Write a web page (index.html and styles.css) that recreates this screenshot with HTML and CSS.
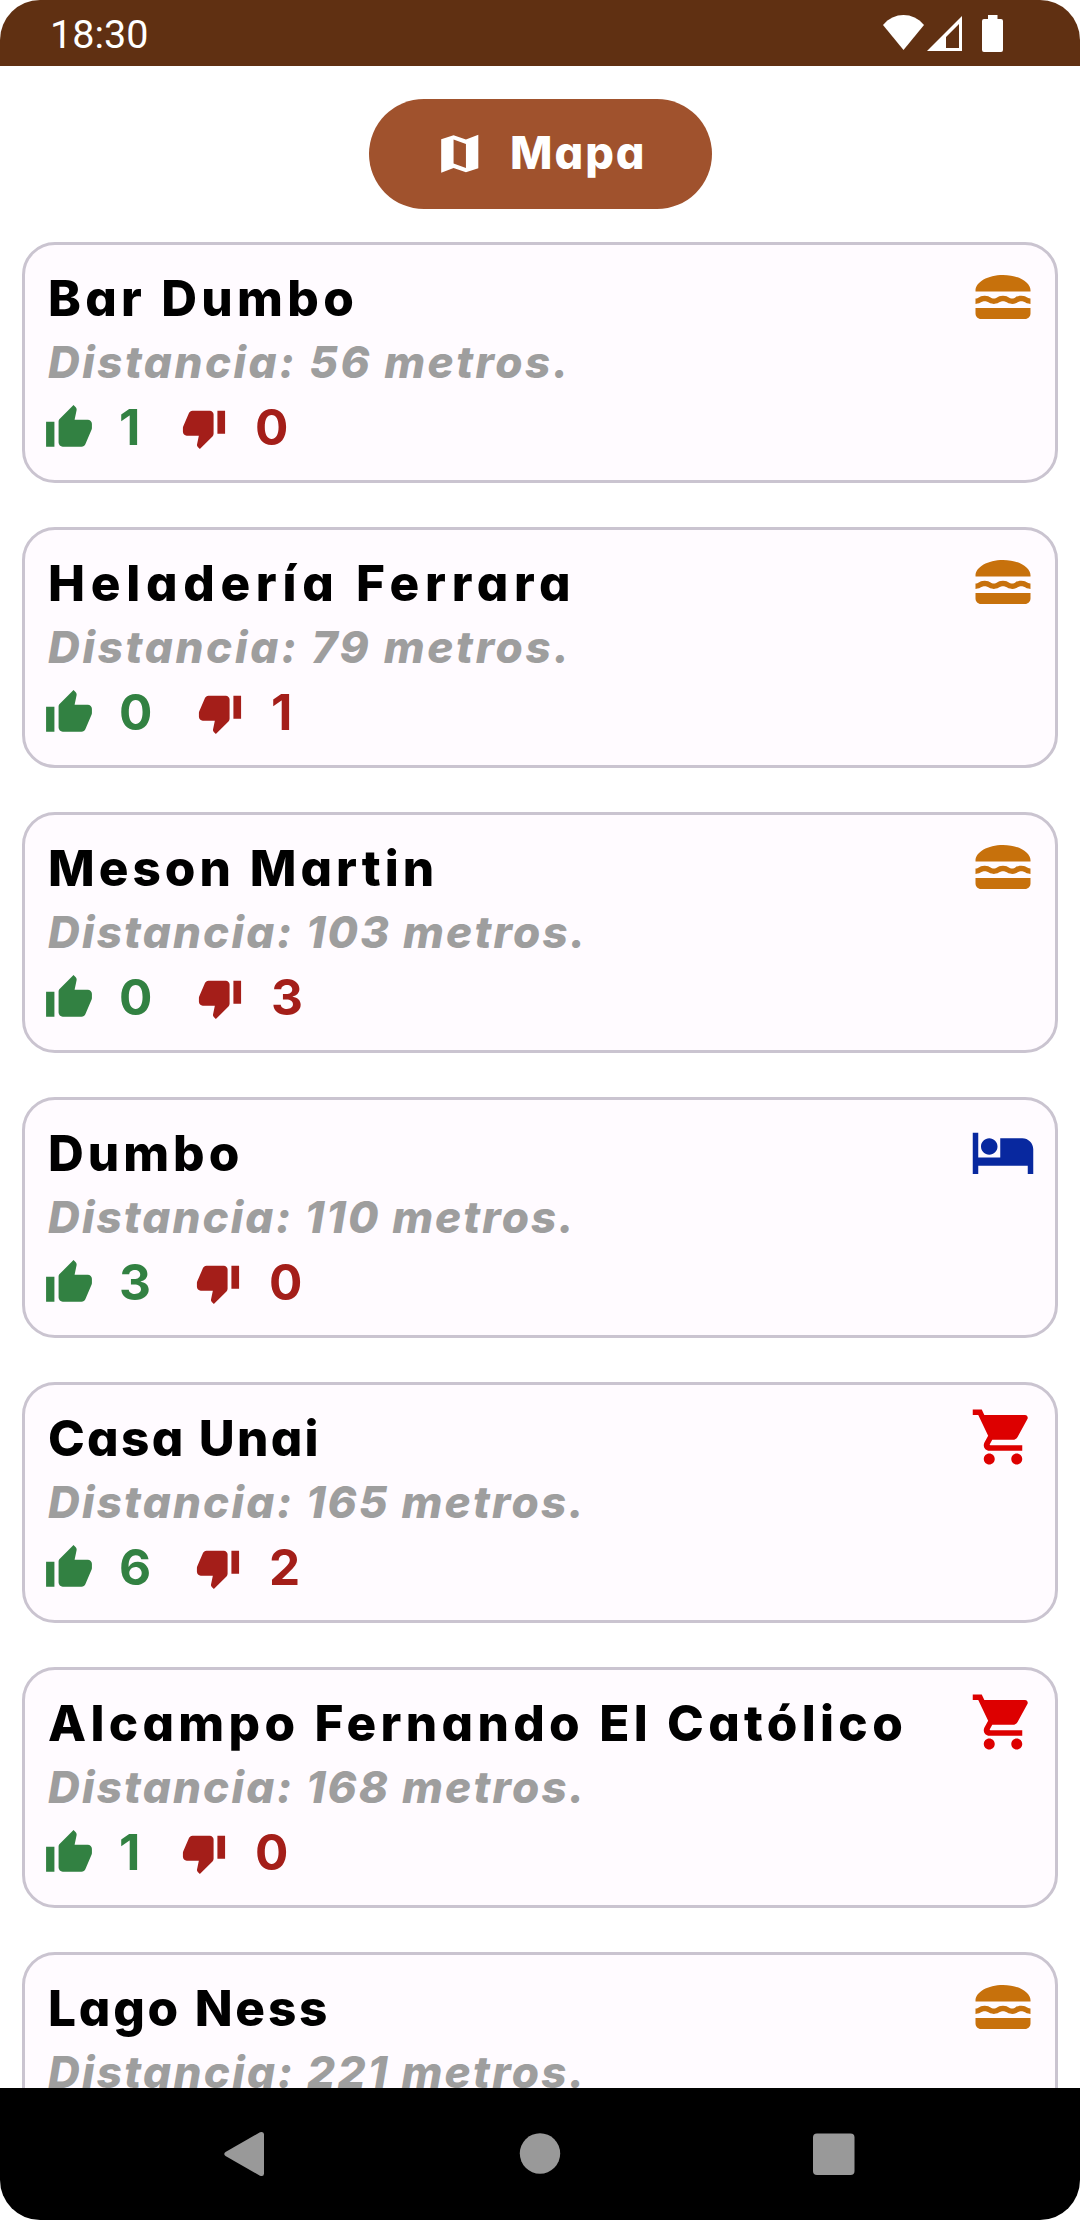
FILE: index.html
```html
<!DOCTYPE html>
<html lang="es">
<head>
<meta charset="utf-8">
<title>Lugares cercanos</title>
<link rel="stylesheet" href="styles.css">
</head>
<body>
<svg class="defs" width="0" height="0" aria-hidden="true">
  <symbol id="burger" viewBox="0 0 24 24"><path d="M2 16H22V18C22 19.100 21.100 20 20 20H4C2.900 20 2 19.100 2 18ZM22 10C22.320 6.720 17.720 4 12.010 4C6.300 4 1.700 6.720 2.020 10ZM5.350 13.500c.55 0 .78.14 1.150.36.45.27 1.070.64 2.180.64s1.730-.37 2.180-.64c.37-.23.59-.36 1.150-.36.55 0 .78.14 1.150.36.45.27 1.070.64 2.180.64 1.110 0 1.730-.37 2.180-.64.37-.23.59-.36 1.150-.36.55 0 .78.14 1.150.36.45.27 1.070.63 2.170.64v-1.980s-.79-.16-1.160-.38c-.45-.27-1.070-.64-2.180-.64-1.110 0-1.730.37-2.180.64-.37.23-.6.36-1.150.36s-.78-.14-1.150-.36c-.45-.27-1.070-.64-2.180-.64s-1.730.37-2.180.64c-.37.23-.59.36-1.150.36-.55 0-.78-.14-1.150-.36-.45-.27-1.070-.64-2.180-.64-1.110 0-1.730.37-2.180.64-.37.23-.59.36-1.150.36v2c1.110 0 1.730-.37 2.180-.64.37-.22.6-.36 1.170-.36z"/></symbol>
  <symbol id="bed" viewBox="0 0 24 24"><path d="M7 13c1.660 0 3-1.340 3-3S8.660 7 7 7s-3 1.340-3 3 1.340 3 3 3zm12-6h-8v7H3V5H1v15h2v-3h18v3h2v-9c0-2.210-1.790-4-4-4z"/></symbol>
  <symbol id="cart" viewBox="0 0 24 24"><path d="M7 18c-1.100 0-1.990.9-1.990 2S5.900 22 7 22s2-.9 2-2-.9-2-2-2zM1 2v2h2l3.600 7.590-1.350 2.450c-.16.28-.25.61-.25.96 0 1.100.9 2 2 2h12v-2H7.420c-.14 0-.25-.11-.25-.25l.03-.12.9-1.630h7.450c.75 0 1.410-.41 1.750-1.030l3.580-6.490c.08-.14.12-.31.12-.48 0-.55-.45-1-1-1H5.210l-.94-2H1zm16 16c-1.100 0-1.990.9-1.990 2s.89 2 1.990 2 2-.9 2-2-.9-2-2-2z"/></symbol>
  <symbol id="up" viewBox="0 0 24 24"><path d="M1 21h4V9H1v12zm22-11c0-1.100-.9-2-2-2h-6.310l.95-4.570.03-.32c0-.41-.17-.79-.44-1.060L14.170 1 7.590 7.590C7.220 7.950 7 8.450 7 9v10c0 1.100.9 2 2 2h9c.83 0 1.540-.5 1.840-1.220l3.020-7.050c.09-.23.14-.47.14-.73v-2z"/></symbol>
  <symbol id="down" viewBox="0 0 24 24"><path d="M15 3H6c-.83 0-1.540.5-1.840 1.220l-3.020 7.050c-.09.23-.14.47-.14.73v2c0 1.100.9 2 2 2h6.310l-.95 4.570-.03.32c0 .41.17.79.44 1.060L9.830 23l6.590-6.590c.36-.36.58-.86.58-1.410V5c0-1.100-.9-2-2-2zm4 0v12h4V3h-4z"/></symbol>
</svg>

<div class="phone">
  <header class="status">
    <span class="clock">18:30</span>
    <div class="indicators">
      <svg class="wifi" viewBox="0 0 41 35"><path d="M20.500 35 0 10C11-3.300 30-3.300 41 10z"/></svg>
      <svg class="signal" viewBox="0 0 35 35"><path fill-rule="evenodd" d="M35 0v35H0zM32 8 19 21v11h13z"/></svg>
      <svg class="battery" viewBox="0 0 21 37"><path d="M6 0h9.500v4H19a2 2 0 0 1 2 2v29a2 2 0 0 1-2 2H2a2 2 0 0 1-2-2V6a2 2 0 0 1 2-2h4z"/></svg>
    </div>
  </header>

  <main class="screen">
    <button class="map-button" type="button">
      <svg class="map-icon" viewBox="0 0 24 24"><path fill-rule="evenodd" d="M15 5.100 9 3 3 5.020v16.200l6-2.330 6 2.100 6-2.020V2.770zM15 18.890l-6-2.110V5.110l6 2.110z"/></svg>
      <span class="map-label">Mapa</span>
    </button>

    <section class="list">
      <article class="card bar-dumbo">
        <div class="info">
          <h2 class="name">Bar Dumbo</h2>
          <p class="distance">Distancia: 56 metros.</p>
          <div class="votes"><svg class="up"><use href="#up"/></svg><span class="likes one">1</span><svg class="down"><use href="#down"/></svg><span class="dislikes">0</span></div>
        </div>
        <svg class="kind food"><use href="#burger"/></svg>
      </article>
      <article class="card ferrara">
        <div class="info">
          <h2 class="name">Heladería Ferrara</h2>
          <p class="distance">Distancia: 79 metros.</p>
          <div class="votes"><svg class="up"><use href="#up"/></svg><span class="likes zero">0</span><svg class="down"><use href="#down"/></svg><span class="dislikes one">1</span></div>
        </div>
        <svg class="kind food"><use href="#burger"/></svg>
      </article>
      <article class="card meson">
        <div class="info">
          <h2 class="name">Meson Martin</h2>
          <p class="distance">Distancia: 103 metros.</p>
          <div class="votes"><svg class="up"><use href="#up"/></svg><span class="likes zero">0</span><svg class="down"><use href="#down"/></svg><span class="dislikes">3</span></div>
        </div>
        <svg class="kind food"><use href="#burger"/></svg>
      </article>
      <article class="card dumbo">
        <div class="info">
          <h2 class="name">Dumbo</h2>
          <p class="distance">Distancia: 110 metros.</p>
          <div class="votes"><svg class="up"><use href="#up"/></svg><span class="likes">3</span><svg class="down"><use href="#down"/></svg><span class="dislikes">0</span></div>
        </div>
        <svg class="kind lodging"><use href="#bed"/></svg>
      </article>
      <article class="card casa">
        <div class="info">
          <h2 class="name">Casa Unai</h2>
          <p class="distance">Distancia: 165 metros.</p>
          <div class="votes"><svg class="up"><use href="#up"/></svg><span class="likes">6</span><svg class="down"><use href="#down"/></svg><span class="dislikes">2</span></div>
        </div>
        <svg class="kind shop"><use href="#cart"/></svg>
      </article>
      <article class="card alcampo">
        <div class="info">
          <h2 class="name">Alcampo Fernando El Católico</h2>
          <p class="distance">Distancia: 168 metros.</p>
          <div class="votes"><svg class="up"><use href="#up"/></svg><span class="likes one">1</span><svg class="down"><use href="#down"/></svg><span class="dislikes">0</span></div>
        </div>
        <svg class="kind shop"><use href="#cart"/></svg>
      </article>
      <article class="card lago">
        <div class="info">
          <h2 class="name">Lago Ness</h2>
          <p class="distance">Distancia: 221 metros.</p>
        </div>
        <svg class="kind food"><use href="#burger"/></svg>
      </article>
    </section>
  </main>

  <nav class="navbar">
    <svg class="nav-icon" viewBox="0 0 46 46"><path d="M3.500 21 38 1.300Q42 0 42 3.500V42.500Q42 46 38 44.700L3.500 25Q1 23 3.500 21z"/></svg>
    <svg class="nav-icon" viewBox="0 0 46 46"><circle cx="23" cy="22.500" r="20.200"/></svg>
    <svg class="nav-icon" viewBox="0 0 46 46"><rect x="2" y="2.500" width="41.500" height="41.500" rx="4"/></svg>
  </nav>
</div>
</body>
</html>
```
FILE: styles.css
```css
* { box-sizing: border-box; }

body {
  margin: 0;
  background: #fff;
  font-family: Inter, "Noto Sans", sans-serif;
  font-feature-settings: "cv11";
}

.defs { display: block; }

.phone {
  display: flex;
  flex-direction: column;
  width: 1080px;
  height: 2220px;
  border-radius: 40px;
  overflow: hidden;
}

.status {
  display: flex;
  flex: none;
  align-items: center;
  justify-content: space-between;
  height: 66px;
  padding: 0 77px 0 50px;
  background: #603012;
  color: #fff;
}

.clock {
  padding-top: 3px;
  font: 400 39.5px/1 Roboto, sans-serif;
}

.indicators {
  display: flex;
  fill: #fff;
}

.wifi { width: 41px; height: 35px; }
.signal { width: 35px; height: 35px; margin: 1px 20px 0 3px; }
.battery { width: 21px; height: 37px; }

.screen {
  display: flex;
  flex: 1;
  flex-direction: column;
  align-items: center;
  min-height: 0;
  padding: 33px 22px 0;
  overflow: hidden;
}

.map-button {
  display: flex;
  flex: none;
  align-items: center;
  gap: 26px;
  width: 343px;
  height: 110px;
  padding: 0 0 0 66px;
  border: 0;
  border-radius: 55px;
  background: #a0522d;
  color: #fff;
  font-family: inherit;
  font-feature-settings: inherit;
}

.map-icon {
  width: 49.5px;
  height: 49.5px;
  fill: #fff;
}

.map-label {
  padding-bottom: 3px;
  font-size: 45px;
  font-weight: 800;
  line-height: 1;
  letter-spacing: 2px;
}

.list {
  display: flex;
  flex: none;
  flex-direction: column;
  gap: 44px;
  width: 100%;
  margin-top: 33px;
}

.card {
  display: flex;
  justify-content: space-between;
  height: 241px;
  padding: 19px;
  border: 3px solid #cac4d0;
  border-radius: 33px;
  background: #fffbff;
}

.info { padding: 1px 0 0 4px; white-space: nowrap; }

.name {
  margin: 0;
  color: #000;
  font-size: 49.5px;
  font-weight: 800;
  line-height: 66px;
  letter-spacing: var(--name-spacing);
}

.distance {
  margin: 0;
  color: #9e9e9e;
  font-size: 44px;
  font-style: italic;
  font-weight: 800;
  line-height: 62px;
  letter-spacing: var(--distance-spacing);
}

.bar-dumbo { --name-spacing: 4.3px; --distance-spacing: 2.5px; }
.ferrara { --name-spacing: 5.7px; --distance-spacing: 2.7px; }
.meson { --name-spacing: 4px; --distance-spacing: 2.2px; }
.dumbo { --name-spacing: 4px; --distance-spacing: 2.1px; }
.casa { --name-spacing: 2.3px; --distance-spacing: 2.2px; }
.alcampo { --name-spacing: 4.3px; --distance-spacing: 2.2px; }
.lago { --name-spacing: 2.8px; --distance-spacing: 2.3px; }

.votes {
  display: flex;
  align-items: center;
  height: 62px;
  margin: 4px 0 0 -4px;
  font-size: 49.5px;
  font-weight: 700;
  line-height: 56px;
}

.up { width: 50px; height: 50px; fill: #328142; }
.down { width: 46px; height: 46px; fill: #a41e19; }
.likes, .dislikes { padding-bottom: 3px; }
.likes { width: 76px; margin-left: 25px; color: #328142; }
.likes.zero { width: 78px; }
.likes.one { width: 62px; }
.dislikes { margin-left: 28px; color: #a41e19; }

.kind { flex: none; width: 66px; height: 66px; }
.food { fill: #c7710c; }
.lodging { fill: #08289f; }
.shop { fill: #dd0000; }

.navbar {
  display: flex;
  flex: none;
  align-items: center;
  justify-content: space-between;
  height: 132px;
  padding: 0 223px 0 222px;
  background: #000;
}

.nav-icon { width: 46px; height: 46px; fill: #999; }
```
